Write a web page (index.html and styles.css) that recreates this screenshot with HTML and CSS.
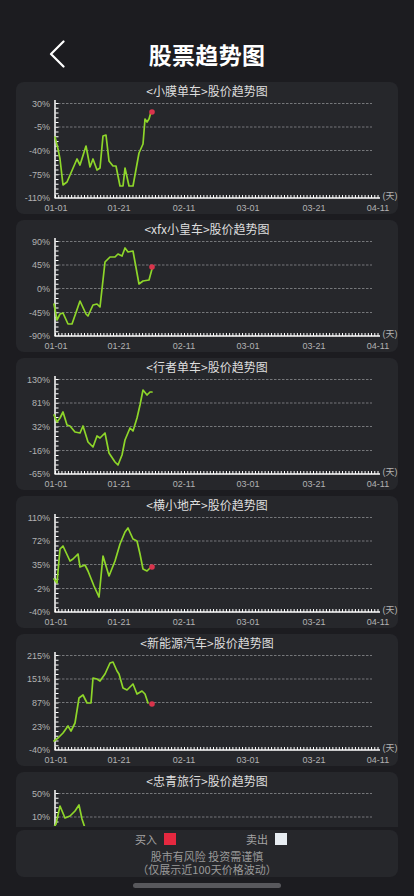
FILE: index.html
```html
<!DOCTYPE html>
<html lang="zh-CN">
<head>
<meta charset="utf-8">
<meta name="viewport" content="width=device-width, initial-scale=1">
<title>股票趋势图</title>
<link rel="stylesheet" href="styles.css">
</head>
<body>
<div class="page">
  <header class="header">
    <div class="back">
      <svg class="chev" viewBox="0 0 16 28" width="16" height="28"><path d="M14.5 1.5 L2 14 L14.5 26.5"/></svg>
    </div>
    <h1 class="title">股票趋势图</h1>
    <div></div>
  </header>

  <main class="list">
    <section class="card">
      <div class="card-title">&lt;小膜单车&gt;股价趋势图</div>
      <svg class="chart" viewBox="0 0 382 114">
        <defs>
          <g id="frame">
            <g class="grid">
              <line x1="42" y1="3.5" x2="356" y2="3.5"/>
              <line x1="42" y1="27" x2="356" y2="27"/>
              <line x1="42" y1="50.5" x2="356" y2="50.5"/>
              <line x1="42" y1="74.5" x2="356" y2="74.5"/>
            </g>
            <line class="axis" x1="39" y1="0" x2="39" y2="98"/>
            <line class="yticks" x1="41" y1="3" x2="41" y2="98"/>
            <line class="axis" x1="38.5" y1="98" x2="364" y2="98"/>
            <line class="xticks" x1="39" y1="96.5" x2="364" y2="96.5"/>
          </g>
        </defs>
        <use href="#frame"/>
        <g class="ylab"><text x="34" y="3.5">30%</text><text x="34" y="27">-5%</text><text x="34" y="50.5">-40%</text><text x="34" y="74.5">-75%</text><text x="34" y="98">-110%</text></g>
        <g class="xlab"><text x="40" y="108">01-01</text><text x="103" y="108">01-21</text><text x="168" y="108">02-11</text><text x="232" y="108">03-01</text><text x="298" y="108">03-21</text><text x="362" y="108">04-11</text><text x="374" y="96">(天)</text></g>
        <polyline class="line" points="39,37 42,49 44,59 47,85 51,82 61,59 64,65 70,46 74,67 77,59 81,70 84,68 87,36 90,35 93,61 97,66 100,66 104,86 107,86 109,68 113,86 117,86 123,53 127,44 129,19 131,22 133,19 135,12"/>
        <circle class="buy" cx="136" cy="12" r="2.8"/>
      </svg>
    </section>

    <section class="card">
      <div class="card-title">&lt;xfx小皇车&gt;股价趋势图</div>
      <svg class="chart" viewBox="0 0 382 114">
        <use href="#frame"/>
        <g class="ylab"><text x="34" y="3.5">90%</text><text x="34" y="27">45%</text><text x="34" y="50.5">0%</text><text x="34" y="74.5">-45%</text><text x="34" y="98">-90%</text></g>
        <g class="xlab"><text x="40" y="108">01-01</text><text x="103" y="108">01-21</text><text x="168" y="108">02-11</text><text x="232" y="108">03-01</text><text x="298" y="108">03-21</text><text x="362" y="108">04-11</text><text x="374" y="96">(天)</text></g>
        <polyline class="line" points="38,66 41,82 44,76 47,75 52,86 56,86 64,63 70,76 72,78 77,67 81,66 84,69 89,24 94,19 99,19 102,16 106,18 109,10 112,14 117,13 123,46 127,43 133,42 136,31"/>
        <circle class="buy" cx="136" cy="29" r="2.8"/>
      </svg>
    </section>

    <section class="card">
      <div class="card-title">&lt;行者单车&gt;股价趋势图</div>
      <svg class="chart" viewBox="0 0 382 114">
        <use href="#frame"/>
        <g class="ylab"><text x="34" y="3.5">130%</text><text x="34" y="27">81%</text><text x="34" y="50.5">32%</text><text x="34" y="74.5">-16%</text><text x="34" y="98">-65%</text></g>
        <g class="xlab"><text x="40" y="108">01-01</text><text x="103" y="108">01-21</text><text x="168" y="108">02-11</text><text x="232" y="108">03-01</text><text x="298" y="108">03-21</text><text x="362" y="108">04-11</text><text x="374" y="96">(天)</text></g>
        <polyline class="line" points="38,39 41,46 44,42 47,36 51,49 54,50 59,56 64,57 67,50 72,66 77,71 81,60 84,62 89,57 93,77 99,86 102,89 106,79 109,64 114,52 117,55 121,42 124,29 127,14 131,19 134,16 136,16"/>
      </svg>
    </section>

    <section class="card">
      <div class="card-title">&lt;横小地产&gt;股价趋势图</div>
      <svg class="chart" viewBox="0 0 382 114">
        <use href="#frame"/>
        <g class="ylab"><text x="34" y="3.5">110%</text><text x="34" y="27">72%</text><text x="34" y="50.5">35%</text><text x="34" y="74.5">-2%</text><text x="34" y="98">-40%</text></g>
        <g class="xlab"><text x="40" y="108">01-01</text><text x="103" y="108">01-21</text><text x="168" y="108">02-11</text><text x="232" y="108">03-01</text><text x="298" y="108">03-21</text><text x="362" y="108">04-11</text><text x="374" y="96">(天)</text></g>
        <polyline class="line" points="38,65 41,69 44,35 47,32 54,47 57,45 62,40 64,53 69,51 72,57 78,72 83,83 87,42 93,62 99,47 104,30 109,18 112,14 117,25 121,27 124,40 127,55 131,57 134,54"/>
        <circle class="buy" cx="136" cy="53" r="2.8"/>
      </svg>
    </section>

    <section class="card">
      <div class="card-title">&lt;新能源汽车&gt;股价趋势图</div>
      <svg class="chart" viewBox="0 0 382 114">
        <use href="#frame"/>
        <g class="ylab"><text x="34" y="3.5">215%</text><text x="34" y="27">151%</text><text x="34" y="50.5">87%</text><text x="34" y="74.5">23%</text><text x="34" y="98">-40%</text></g>
        <g class="xlab"><text x="40" y="108">01-01</text><text x="103" y="108">01-21</text><text x="168" y="108">02-11</text><text x="232" y="108">03-01</text><text x="298" y="108">03-21</text><text x="362" y="108">04-11</text><text x="374" y="96">(天)</text></g>
        <polyline class="line" points="38,89 42,86 47,81 52,74 55,79 59,71 63,46 67,43 71,51 75,51 77,26 81,27 84,29 89,22 94,11 97,10 101,19 103,22 107,36 111,38 117,32 121,42 126,39 129,42 132,51"/>
        <circle class="buy" cx="136" cy="52" r="2.8"/>
      </svg>
    </section>

    <section class="card card-cut">
      <div class="card-title">&lt;忠青旅行&gt;股价趋势图</div>
      <svg class="chart chart-cut" viewBox="0 0 382 36">
        <g class="grid">
          <line x1="42" y1="3.5" x2="356" y2="3.5"/>
          <line x1="42" y1="27" x2="356" y2="27"/>
        </g>
        <line class="axis" x1="39" y1="0" x2="39" y2="36"/>
        <line class="yticks" x1="41" y1="3" x2="41" y2="36"/>
        <g class="ylab"><text x="34" y="3.5">50%</text><text x="34" y="27">10%</text></g>
        <polyline class="line" points="38,37 40,34 44,16 49,28 54,26 59,21 63,15 66,29 69,38"/>
      </svg>
    </section>
  </main>

  <footer class="footer">
    <div class="legend">
      <span class="item">买入<i class="swatch buy-sw"></i></span>
      <span class="item">卖出<i class="swatch sell-sw"></i></span>
    </div>
    <p class="note">股市有风险 投资需谨慎<br>（仅展示近100天价格波动）</p>
  </footer>
  <div class="home"><span class="home-bar"></span></div>
</div>
</body>
</html>
```

FILE: styles.css
```css
* { box-sizing: border-box; }
html, body { margin: 0; height: 100%; }
body {
  background: #1c1c20;
  color: #fff;
  font-family: "Noto Sans CJK SC", "Liberation Sans", sans-serif;
}
.page {
  height: 100vh;
  display: flex;
  flex-direction: column;
  overflow: hidden;
}
.header {
  flex: none;
  height: 82px;
  padding-top: 38px;
  display: grid;
  grid-template-columns: 1fr auto 1fr;
  align-items: start;
}
.back {
  height: 32px;
  padding-left: 49px;
  display: flex;
  align-items: center;
}
.chev { display: block; }
.chev path {
  fill: none;
  stroke: #fff;
  stroke-width: 2.2;
  stroke-linecap: round;
  stroke-linejoin: round;
}
.title {
  margin: 0;
  height: 32px;
  line-height: 32px;
  font-size: 23px;
  font-weight: 700;
  letter-spacing: 0.3px;
}
.list {
  flex: 1;
  min-height: 0;
  overflow: hidden;
  padding: 0 16px;
  display: flex;
  flex-direction: column;
  gap: 6px;
}
.card {
  flex: none;
  height: 132px;
  background: #26272b;
  border-radius: 8px;
}
.card-cut {
  height: 56px;
  border-radius: 8px 8px 0 0;
}
.card-title {
  height: 18px;
  line-height: 18px;
  text-align: center;
  font-size: 12px;
  color: #dedede;
}
.chart {
  display: block;
  width: 382px;
  height: 114px;
}
.chart-cut {
  height: 36px;
  overflow: hidden;
}
.grid line {
  stroke: #8a8b8f;
  stroke-width: 0.8;
  stroke-dasharray: 2.5 1.5;
}
.axis { stroke: #fff; stroke-width: 1.5; }
.yticks { stroke: #fff; stroke-width: 3; stroke-dasharray: 1 3.75; }
.xticks { stroke: #fff; stroke-width: 3; stroke-dasharray: 1 2.225; }
.chart text {
  font-family: "Liberation Sans", "Noto Sans CJK SC", sans-serif;
  font-size: 9px;
  fill: #b2b2b2;
  dominant-baseline: central;
}
.ylab text { text-anchor: end; }
.xlab text { text-anchor: middle; }
.line {
  fill: none;
  stroke: #8ed62a;
  stroke-width: 1.7;
  stroke-linejoin: round;
  stroke-linecap: round;
}
.buy { fill: #d9344c; }
.footer {
  flex: none;
  margin: 3px 16px 0;
  height: 47px;
  background: #26272b;
  border-radius: 8px;
  padding-top: 2px;
  text-align: center;
}
.legend {
  height: 14px;
  display: flex;
  justify-content: center;
  align-items: center;
  gap: 70px;
  padding-left: 8px;
}
.item {
  display: flex;
  align-items: center;
  gap: 7px;
  font-size: 11px;
  color: #a4a4a4;
  line-height: 14px;
}
.swatch {
  display: block;
  width: 12px;
  height: 12px;
}
.buy-sw { background: #e5283f; }
.sell-sw { background: #e8edf2; }
.note {
  margin: 4px 0 0;
  font-size: 11px;
  line-height: 13px;
  color: #9a9a9a;
}
.home {
  flex: none;
  height: 19px;
  padding-top: 6px;
  display: flex;
  justify-content: center;
}
.home-bar {
  display: block;
  width: 148px;
  height: 5px;
  border-radius: 3px;
  background: #58585c;
}
```
